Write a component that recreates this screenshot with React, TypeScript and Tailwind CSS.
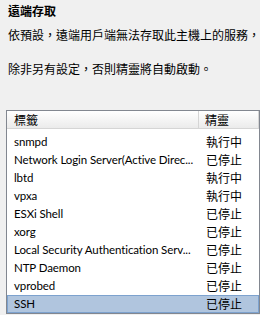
import React from "react";

const rows: [string, string][] = [
  ["snmpd", "執行中"],
  ["Network Login Server(Active Direc...", "已停止"],
  ["lbtd", "執行中"],
  ["vpxa", "執行中"],
  ["ESXi Shell", "已停止"],
  ["xorg", "已停止"],
  ["Local Security Authentication Serv...", "已停止"],
  ["NTP Daemon", "已停止"],
  ["vprobed", "已停止"],
  ["SSH", "已停止"],
];

const cjk = { fontFamily: '"Noto Sans CJK TC", sans-serif' };
const latin = { fontFamily: 'Lato, "Noto Sans CJK TC", sans-serif' };

export default function App() {
  return (
    <div className="w-[260px] h-[315px] overflow-hidden bg-[#f0f0f0] text-black">
      {/* Intro text */}
      <div className="pl-2 pt-[3px] text-[12px] leading-[16px]" style={cjk}>
        <div className="font-bold">遠端存取</div>
        <p className="mt-[8px] whitespace-nowrap">依預設，遠端用戶端無法存取此主機上的服務，</p>
        <p className="mt-[18px] whitespace-nowrap">除非另有設定，否則精靈將自動啟動。</p>
      </div>

      {/* Service list */}
      <div className="ml-[6px] mt-[33px] w-[254px] border border-[#828790] bg-white">
        <div className="flex h-[18px] text-[12px] leading-[17px]" style={cjk}>
          <div className="w-[192px] pl-[7px] border-r border-b border-[#d5d5d5] bg-gradient-to-b from-white to-[#ebebeb]">
            標籤
          </div>
          <div className="flex-1 pl-[6px] border-r border-b border-[#d5d5d5] bg-gradient-to-b from-white to-[#ebebeb]">
            精靈
          </div>
        </div>
        <div className="pt-[4px]">
          {rows.map(([name, state], i) => {
            const selected = i === rows.length - 1;
            return (
              <div
                key={name}
                className={
                  selected
                    ? "flex h-[18px] items-center border border-[#7da2ce] bg-[#b0c5de]"
                    : "flex h-[18px] items-center border border-transparent"
                }
              >
                <div className="w-[191px] pl-[6px] text-[11.5px] tracking-[-0.1px] whitespace-nowrap overflow-hidden" style={latin}>
                  {name}
                </div>
                <div className="flex-1 pl-[7px] text-[12px]" style={cjk}>
                  {state}
                </div>
              </div>
            );
          })}
        </div>
      </div>
    </div>
  );
}
